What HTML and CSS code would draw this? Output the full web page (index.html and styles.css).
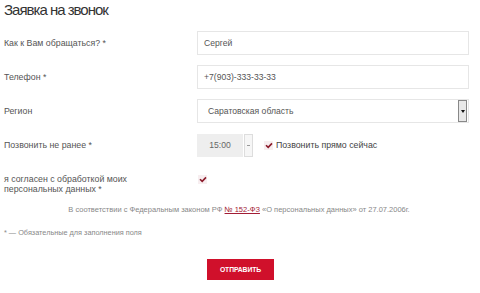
FILE: index.html
```html
<!DOCTYPE html>
<html lang="ru">
<head>
<meta charset="utf-8">
<link rel="stylesheet" href="styles.css">
</head>
<body>
<div class="page">
  <h1 class="title">Заявка на звонок</h1>
  <div class="form">
    <div class="row">
      <div class="label">Как к Вам обращаться? *</div>
      <div class="field"><div class="input">Сергей</div></div>
    </div>
    <div class="row">
      <div class="label">Телефон *</div>
      <div class="field"><div class="input">+7(903)-333-33-33</div></div>
    </div>
    <div class="row">
      <div class="label">Регион</div>
      <div class="field"><div class="input select"><span class="sel-text">Саратовская область</span><span class="sel-btn"><span class="arrow"></span></span></div></div>
    </div>
    <div class="row">
      <div class="label">Позвонить не ранее *</div>
      <div class="field time-field">
        <div class="time">15:00</div>
        <div class="spin"><span class="dash"></span></div>
        <span class="check"><svg width="8" height="7" viewBox="0 0 8 7"><path d="M1 3.2 L3.2 5.4 L7 1.4" fill="none" stroke="#8b1a2a" stroke-width="1.6"/></svg></span>
        <span class="now">Позвонить прямо сейчас</span>
      </div>
    </div>
    <div class="row agree">
      <div class="label">я согласен с обработкой моих<br>персональных данных *</div>
      <div class="field agree-field">
        <span class="check box"><svg width="8" height="7" viewBox="0 0 8 7"><path d="M1 3.2 L3.2 5.4 L7 1.4" fill="none" stroke="#8b1a2a" stroke-width="1.6"/></svg></span>
      </div>
    </div>
  </div>
  <p class="legal">В соответствии с Федеральным законом РФ <a href="#" class="law">№ 152-ФЗ</a> «О персональных данных» от 27.07.2006г.</p>
  <p class="note">* — Обязательные для заполнения поля</p>
  <div class="actions"><button class="submit">ОТПРАВИТЬ</button></div>
</div>
</body>
</html>
```

FILE: styles.css
```css
* { box-sizing: border-box; }
html, body { margin: 0; padding: 0; background: #fff; }
body { font-family: "Liberation Sans", Arial, sans-serif; color: #333; }
.page { width: 480px; height: 293px; padding: 0 11px 0 4px; overflow: hidden; }
.title { margin: 0; font-size: 15px; font-weight: normal; letter-spacing: -1px; line-height: 20px; color: #333; }
.form { margin-top: 11px; display: flex; flex-direction: column; gap: 10px; }
.row { display: grid; grid-template-columns: 193px 1fr; align-items: center; height: 24px; }
.label { font-size: 8.8px; color: #555; line-height: 10.5px; }
.input { height: 24px; border: 1px solid #e6e6e6; display: flex; align-items: center; padding-left: 6px; font-size: 8.6px; color: #555; background: #fff; }
.select { padding-left: 0; justify-content: space-between; }
.sel-text { padding-left: 10px; }
.sel-btn { width: 9px; height: 22px; margin-right: 1px; border: 1px solid #888; background: #e8e8e8; display: flex; align-items: center; justify-content: center; }
.arrow { width: 0; height: 0; border-left: 2px solid transparent; border-right: 2px solid transparent; border-top: 3px solid #111; }
.time-field { display: flex; align-items: center; }
.time { width: 46px; height: 23px; background: #eee; display: flex; align-items: center; justify-content: center; font-size: 8.6px; color: #666; }
.spin { width: 9px; height: 23px; margin-left: 1px; border: 1px solid #ddd; background: #f6f6f6; display: flex; align-items: center; justify-content: center; }
.dash { width: 3px; height: 1px; background: #999; }
.check { display: inline-flex; align-items: center; justify-content: center; width: 9px; height: 9px; background: #f7eef0; margin-left: 11px; }
.now { font-size: 8.8px; color: #444; margin-left: 3px; }
.agree { height: 26px; margin-top: 6px; align-items: start; }
.agree .label { padding-top: 1px; line-height: 10px; }
.agree-field { display: flex; padding-top: 2px; }
.box { margin-left: 1px; }
.legal { margin: 6px 0 0; text-align: center; font-size: 7.5px; color: #888; line-height: 10px; padding-left: 5px; }
.law { color: #a21c35; text-decoration: underline; }
.note { margin: 13px 0 0; font-size: 7.3px; color: #888; line-height: 10px; }
.actions { display: flex; justify-content: center; margin-top: 21px; padding-left: 8px; }
.submit { width: 67px; height: 21px; border: none; background: #d0102b; color: #fff; font-family: "Liberation Sans", Arial, sans-serif; font-weight: bold; font-size: 6.8px; letter-spacing: -0.1px; padding: 0; }
```
